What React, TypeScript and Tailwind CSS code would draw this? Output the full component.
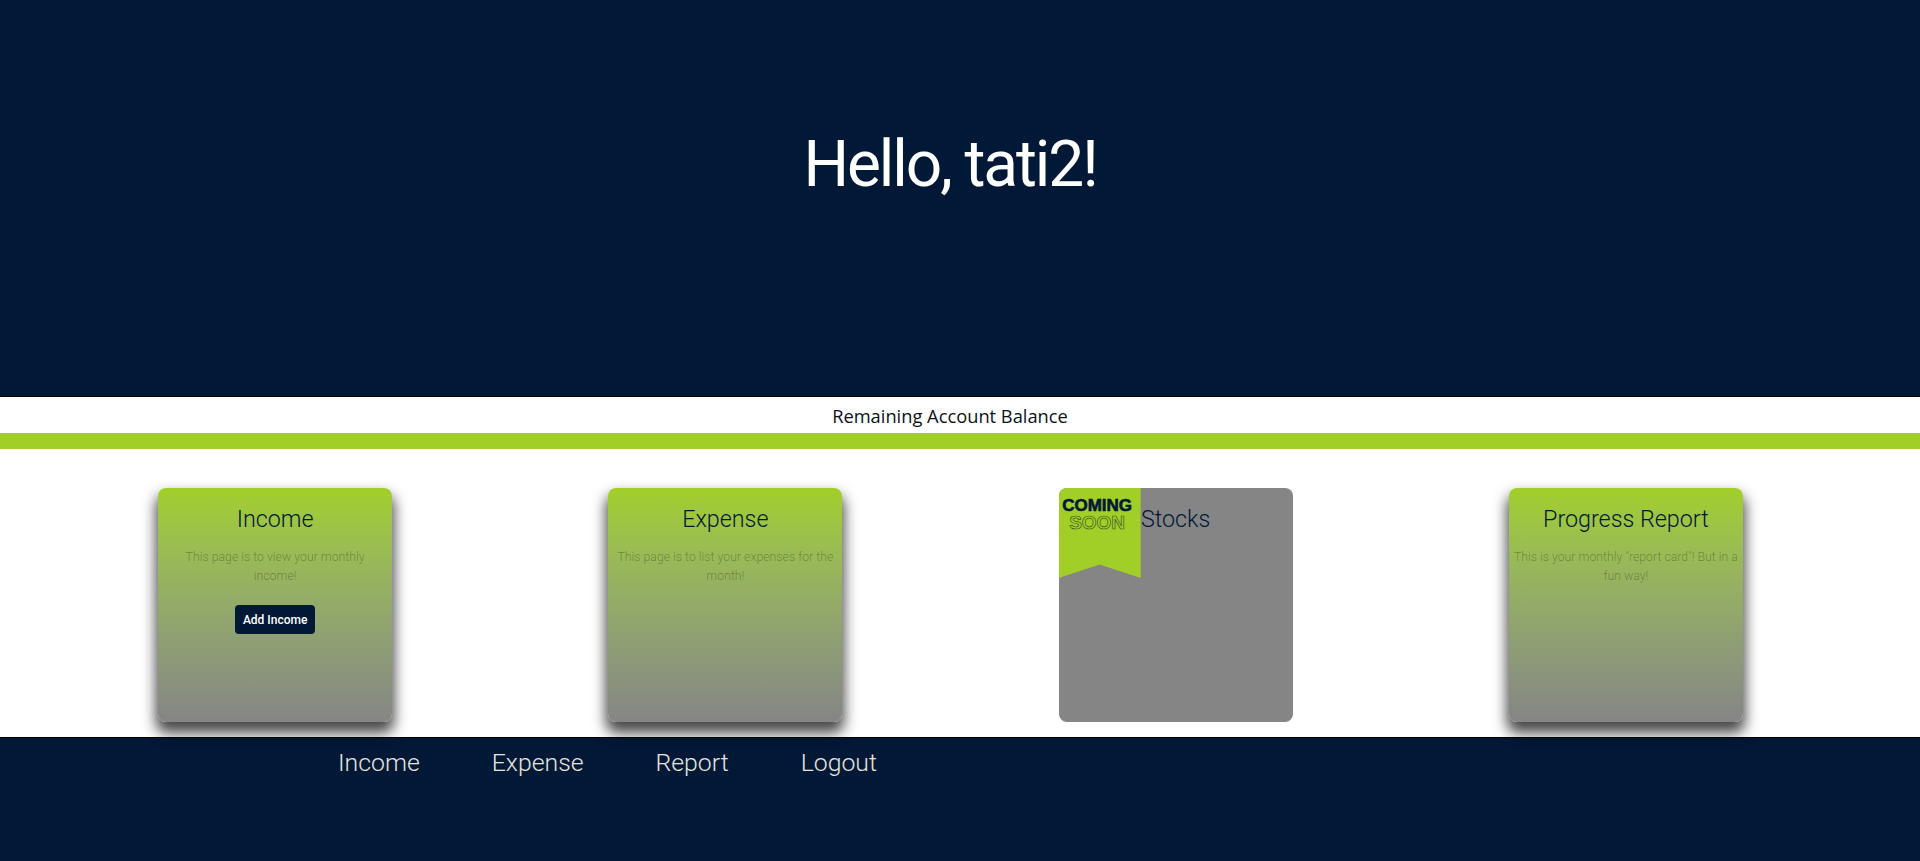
const plex = "font-['Roboto','Inter','Noto_Sans',sans-serif]";

function Card({ title, text, button }: { title: string; text?: string; button?: string }) {
  return (
    <div className="flex justify-center">
      <div className="flex h-[234px] w-[234px] flex-col items-center rounded-[8px] bg-gradient-to-b from-[#a2cf27] to-[#858585] px-[5px] pt-[13px] text-center shadow-[0_9px_14px_2px_rgba(0,0,0,0.72)]">
        <h3 className="text-[23.3px] leading-[36px] font-light text-[#011936]">{title}</h3>
        <p className="mt-[11px] text-[12.3px] leading-[19px] font-light text-black/30">{text}</p>
        {button && (
          <button className="mt-[19px] h-[29px] w-[80px] rounded-[4px] bg-[#011936] text-[12px] font-medium text-white">
            {button}
          </button>
        )}
      </div>
    </div>
  );
}

function StocksCard() {
  return (
    <div className="flex justify-center">
      <div className="relative flex h-[234px] w-[234px] flex-col items-center rounded-[8px] bg-[#858585] pt-[13px] text-center">
        <div className="absolute top-0 left-0 h-[90px] w-[82px] overflow-hidden rounded-tl-[8px] bg-[#a2cf27] pt-[10px] pr-[5px] text-center font-['Liberation_Sans',sans-serif] [clip-path:polygon(0_0,100%_0,100%_100%,50%_85%,0_100%)]">
          <div className="text-[17px] leading-[16px] font-black text-[#011936] [-webkit-text-stroke:0.6px_#011936]">COMING</div>
          <div className="text-[19px] leading-[18px] font-bold text-transparent [-webkit-text-stroke:0.7px_#3f5a2a]">SOON</div>
        </div>
        <h3 className="text-[23.3px] leading-[36px] font-light text-[#011936]">Stocks</h3>
      </div>
    </div>
  );
}

export default function App() {
  return (
    <div className={`flex h-[861px] flex-col overflow-hidden bg-white ${plex}`}>
      <header className="flex h-[397px] items-start justify-center border-b border-black bg-[#011936] pt-[125px] pr-[20px]">
        <h1 className="text-[64px] leading-[80px] font-normal tracking-[-2.1px] text-white">Hello, tati2!</h1>
      </header>
      <div className="h-[36px] pt-[1px] pr-[20px] text-center font-['Open_Sans','Noto_Sans',sans-serif] text-[18.3px] leading-[36px] font-medium text-[#0b1220]">
        Remaining Account Balance
      </div>
      <div className="h-[16px] bg-[#a2cf27]" />
      <main className="relative z-10 grid h-[288px] grid-cols-4 pt-[39px] pr-[69px] pl-[50px]">
        <Card title="Income" text="This page is to view your monthly income!" button="Add Income" />
        <Card title="Expense" text="This page is to list your expenses for the month!" />
        <StocksCard />
        <Card title="Progress Report" text={'This is your monthly "report card"! But in a fun way!'} />
      </main>
      <footer className="flex-1 border-t border-black bg-[#011936] pt-[9px] pl-[338px]">
        <nav className="flex gap-[72px] text-[24.8px] leading-[32px] font-light text-[#e8e4dc]">
          <a>Income</a>
          <a>Expense</a>
          <a>Report</a>
          <a>Logout</a>
        </nav>
      </footer>
    </div>
  );
}
